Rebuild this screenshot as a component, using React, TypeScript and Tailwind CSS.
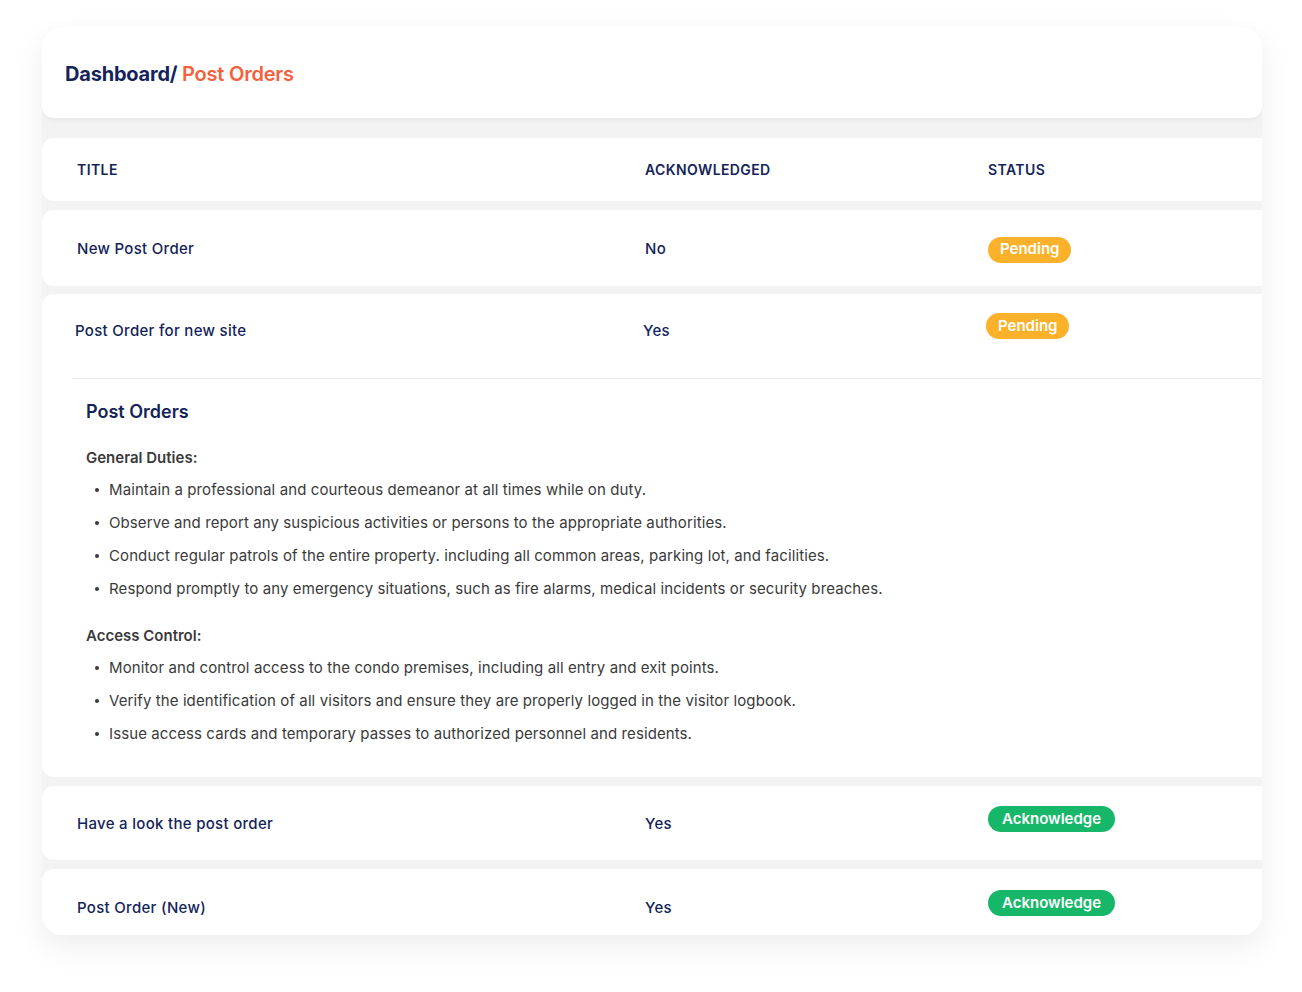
import React from 'react';

type Row = {
  title: string;
  acknowledged: string;
  status: 'Pending' | 'Acknowledge';
  height: string;
};

const generalDuties = [
  'Maintain a professional and courteous demeanor at all times while on duty.',
  'Observe and report any suspicious activities or persons to the appropriate authorities.',
  'Conduct regular patrols of the entire property. including all common areas, parking lot, and facilities.',
  'Respond promptly to any emergency situations, such as fire alarms, medical incidents or security breaches.',
];

const accessControl = [
  'Monitor and control access to the condo premises, including all entry and exit points.',
  'Verify the identification of all visitors and ensure they are properly logged in the visitor logbook.',
  'Issue access cards and temporary passes to authorized personnel and residents.',
];

const StatusBadge = ({ status }: { status: Row['status'] }) => (
  <span
    className={
      status === 'Pending'
        ? 'inline-flex h-[26px] items-center rounded-full bg-[#fbb12a] px-[12px] text-[15px] font-semibold tracking-normal text-white'
        : 'inline-flex h-[26px] items-center rounded-full bg-[#17b76a] px-[14px] text-[15px] font-semibold tracking-normal text-white'
    }
  >
    {status}
  </span>
);

const BulletList = ({ items }: { items: string[] }) => (
  <ul className="mt-[8px] flex flex-col gap-[9px]">
    {items.map((item) => (
      <li key={item} className="flex items-center text-[15px] leading-6 tracking-[0.1px] text-[#3a3a3a]">
        <span className="ml-[9px] mr-[10px] h-[4px] w-[4px] rounded-full bg-[#3a3a3a]" />
        {item}
      </li>
    ))}
  </ul>
);

export default function App() {
  return (
    <div className="min-h-screen bg-white pl-[42px] pt-[27px] font-['Inter',sans-serif] text-[#14245a]">
      <div className="h-[908px] w-[1220px] overflow-hidden rounded-[20px] bg-[#f3f3f3] shadow-[0_12px_32px_rgba(0,0,0,0.07)]">
        {/* Breadcrumb */}
        <div className="flex h-[91px] items-center rounded-b-[12px] bg-white pl-[23px] pt-[3px] shadow-[0_2px_6px_rgba(0,0,0,0.05)]">
          <h1 className="text-[20px] font-bold tracking-[-0.2px]">
            Dashboard/ <span className="font-semibold text-[#f5603d]">Post Orders</span>
          </h1>
        </div>

        {/* Table header */}
        <div className="mt-[20px] grid h-[63px] grid-cols-[568px_343px_1fr] items-center rounded-l-[12px] bg-white pl-[35px] text-[14px] font-semibold tracking-[0.4px]">
          <span>TITLE</span>
          <span>ACKNOWLEDGED</span>
          <span>STATUS</span>
        </div>

        {/* Row 1 */}
        <div className="mt-[9px] grid h-[76px] grid-cols-[568px_343px_1fr] items-center rounded-l-[12px] bg-white pl-[35px] pt-[3px] text-[15px] font-medium tracking-[0.3px]">
          <span>New Post Order</span>
          <span>No</span>
          <span>
            <StatusBadge status="Pending" />
          </span>
        </div>

        {/* Row 2 expanded */}
        <div className="mt-[8px] h-[483px] rounded-l-[12px] bg-white">
          <div className="grid h-[84px] grid-cols-[568px_343px_1fr] pl-[33px] text-[15px] font-medium tracking-[0.3px]">
            <span className="pt-[25px] leading-6">Post Order for new site</span>
            <span className="pt-[25px] leading-6">Yes</span>
            <span className="pt-[19px]">
              <StatusBadge status="Pending" />
            </span>
          </div>
          <div className="ml-[30px] border-t border-[#ebebe8] pl-[14px] pt-[21px]">
            <h3 className="text-[18px] font-semibold leading-6">Post Orders</h3>
            <p className="mt-[22px] text-[15px] font-semibold leading-6 text-[#3a3a3a]">General Duties:</p>
            <BulletList items={generalDuties} />
            <p className="mt-[23px] text-[15px] font-semibold leading-6 text-[#3a3a3a]">Access Control:</p>
            <BulletList items={accessControl} />
          </div>
        </div>

        {/* Row 3 */}
        <div className="mt-[9px] grid h-[74px] grid-cols-[568px_343px_1fr] rounded-l-[12px] bg-white pl-[35px] text-[15px] font-medium tracking-[0.3px]">
          <span className="pt-[26px] leading-6">Have a look the post order</span>
          <span className="pt-[26px] leading-6">Yes</span>
          <span className="pt-[20px]">
            <StatusBadge status="Acknowledge" />
          </span>
        </div>

        {/* Row 4 */}
        <div className="mt-[9px] grid h-[74px] grid-cols-[568px_343px_1fr] rounded-l-[12px] bg-white pl-[35px] text-[15px] font-medium tracking-[0.3px]">
          <span className="pt-[27px] leading-6">Post Order (New)</span>
          <span className="pt-[27px] leading-6">Yes</span>
          <span className="pt-[21px]">
            <StatusBadge status="Acknowledge" />
          </span>
        </div>
      </div>
    </div>
  );
}
